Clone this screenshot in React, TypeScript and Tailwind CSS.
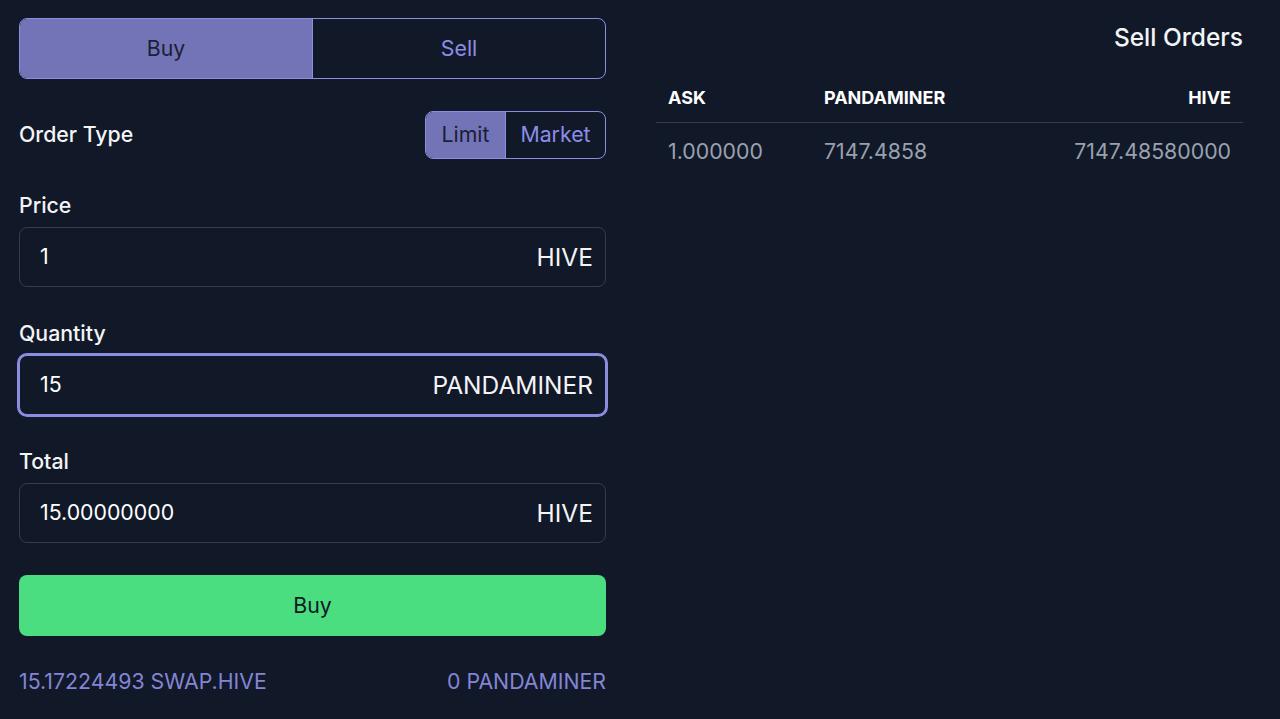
import { useState } from "react";

const orders = [{ ask: "1.000000", qty: "7147.4858", total: "7147.48580000" }];

function Field({ label, value, unit, focused }: { label: string; value: string; unit: string; focused?: boolean }) {
  return (
    <div className="flex flex-col gap-2">
      <label className="text-[21.3px] leading-7 font-medium text-gray-100">{label}</label>
      <div
        className={
          focused
            ? "flex h-[60px] items-center justify-between rounded-lg border border-[#8b8ee0] bg-[#111827] px-5 pr-3 ring-2 ring-[#8b8ee0]"
            : "flex h-[60px] items-center justify-between rounded-lg border border-[#363c4a] bg-[#111827] px-5 pr-3"
        }
      >
        <span className="text-[21.3px] text-white">{value}</span>
        <span className="text-[24.5px] text-gray-100">{unit}</span>
      </div>
    </div>
  );
}

export default function App() {
  const [side, setSide] = useState<"buy" | "sell">("buy");
  const [type, setType] = useState<"limit" | "market">("limit");

  return (
    <div className="min-h-[719px] w-full bg-[#111827] font-['Inter',sans-serif]">
      <div className="flex gap-[50px] pl-[19px] pr-[37px] pt-[18px]">
        {/* Order form */}
        <div className="flex w-[587px] shrink-0 flex-col gap-8">
          <div className="flex h-[61px] overflow-hidden rounded-lg border border-[#8b8ee0]">
            <button
              onClick={() => setSide("buy")}
              className={
                side === "buy"
                  ? "flex-1 bg-[#7374b8] text-[21.3px] text-[#1c1e33]"
                  : "flex-1 text-[21.3px] text-[#8b8ee8]"
              }
            >
              Buy
            </button>
            <button
              onClick={() => setSide("sell")}
              className={
                side === "sell"
                  ? "flex-1 border-l border-[#8b8ee0] bg-[#7374b8] text-[21.3px] text-[#1c1e33]"
                  : "flex-1 border-l border-[#8b8ee0] text-[21.3px] text-[#8b8ee8]"
              }
            >
              Sell
            </button>
          </div>

          <div className="flex items-center justify-between">
            <span className="text-[21.3px] font-medium text-gray-100">Order Type</span>
            <div className="flex h-12 overflow-hidden rounded-lg border border-[#8b8ee0]">
              <button
                onClick={() => setType("limit")}
                className={
                  type === "limit"
                    ? "w-[79px] bg-[#7374b8] text-[21.3px] text-[#1c1e33]"
                    : "w-[79px] text-[21.3px] text-[#8b8ee8]"
                }
              >
                Limit
              </button>
              <button
                onClick={() => setType("market")}
                className={
                  type === "market"
                    ? "w-[100px] border-l border-[#8b8ee0] bg-[#7374b8] text-[21.3px] text-[#1c1e33]"
                    : "w-[100px] border-l border-[#8b8ee0] text-[21.3px] text-[#8b8ee8]"
                }
              >
                Market
              </button>
            </div>
          </div>

          <Field label="Price" value="1" unit="HIVE" />
          <Field label="Quantity" value="15" unit="PANDAMINER" focused />
          <Field label="Total" value="15.00000000" unit="HIVE" />

          <button className="h-[61px] rounded-lg bg-[#4ade80] text-[21.3px] text-[#111827]">Buy</button>

          <div className="-mt-[2px] flex items-center justify-between text-[21.3px] text-[#8385d6]">
            <span>15.17224493 SWAP.HIVE</span>
            <span>0 PANDAMINER</span>
          </div>
        </div>

        {/* Sell orders */}
        <div className="flex flex-1 flex-col">
          <h2 className="mt-[3px] text-right text-[24.5px] leading-8 font-medium text-gray-100">Sell Orders</h2>
          <table className="mt-5 w-full">
            <thead>
              <tr className="border-b border-[#363c4a]">
                <th className="w-[156px] px-3 py-3 text-left text-[18px] leading-[25px] font-bold text-white">ASK</th>
                <th className="px-3 py-3 text-left text-[18px] leading-[25px] font-bold text-white">PANDAMINER</th>
                <th className="px-3 py-3 text-right text-[18px] leading-[25px] font-bold text-white">HIVE</th>
              </tr>
            </thead>
            <tbody>
              {orders.map((o) => (
                <tr key={o.ask}>
                  <td className="px-3 pt-[14px] pb-3 text-[21.3px] leading-7 text-gray-400">{o.ask}</td>
                  <td className="px-3 pt-[14px] pb-3 text-[21.3px] leading-7 text-gray-400">{o.qty}</td>
                  <td className="px-3 pt-[14px] pb-3 text-right text-[21.3px] leading-7 text-gray-400">{o.total}</td>
                </tr>
              ))}
            </tbody>
          </table>
        </div>
      </div>
    </div>
  );
}
